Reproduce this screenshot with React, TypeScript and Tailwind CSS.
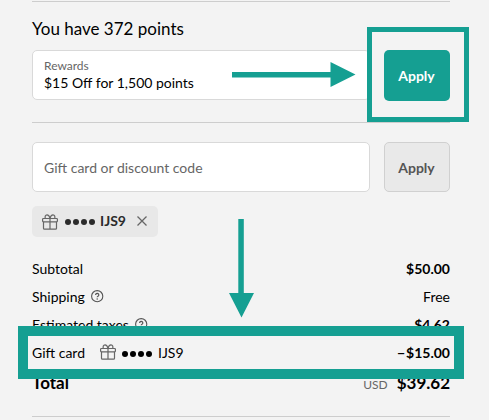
import type { ReactNode } from 'react';

function GiftIcon({ className = '' }: { className?: string }) {
  return (
    <svg
      className={className}
      width="16"
      height="16"
      viewBox="0 0 16 16"
      fill="none"
      stroke="#666"
      strokeWidth="1.2"
      strokeLinejoin="round"
    >
      <rect x="0.6" y="4.5" width="14.8" height="3.3" rx="0.8" />
      <path d="M1.5 7.8v6.400a1 1 0 0 0 1 1h11a1 1 0 0 0 1-1V7.800M8 4.500v10.700" />
      <path d="M3.400 4.400C2.600 2.800 3.400.8 5 .8 6.600.8 7.500 2.200 8 4.300 8.500 2.200 9.400.8 11 .8c1.600 0 2.400 2 1.600 3.600" />
    </svg>
  );
}

function HelpIcon() {
  return (
    <svg className="-mt-[2px]" width="13" height="13" viewBox="0 0 13 13" fill="none" stroke="#555" strokeWidth="1.1">
      <circle cx="6.2" cy="6.2" r="5.6" />
      <path d="M4.600 4.900a1.600 1.500 0 1 1 2.400 1.300c-.5.3-.8.5-.8 1.100" strokeWidth="1.2" />
      <circle cx="6.2" cy="8.9" r="0.75" fill="#555" stroke="none" />
    </svg>
  );
}

function Dots({ className = '' }: { className?: string }) {
  return (
    <span className={`flex gap-[2px] ${className}`}>
      {[0, 1, 2, 3].map((i) => (
        <span key={i} className="size-[6px] rounded-full bg-current" />
      ))}
    </span>
  );
}

function SummaryRow({ label, value, bold = true }: { label: ReactNode; value: ReactNode; bold?: boolean }) {
  return (
    <div className="flex h-7 items-center justify-between">
      <div className="flex items-center gap-1.5">{label}</div>
      <div className={bold ? 'font-bold' : ''}>{value}</div>
    </div>
  );
}

export default function App() {
  return (
    <div className="relative h-[420px] w-[489px] overflow-hidden bg-[#f3f3f3] font-[Lato,sans-serif] text-[14px] leading-5 text-black">
      <div className="ml-8 flex w-[418px] flex-col pt-px">
        <section className="h-[121px] border-t border-[#cdcdcd] pt-[15px]">
          <h2 className="h-[33px] text-[17px] leading-6">You have 372 points</h2>
          <div className="flex justify-between">
            <div className="h-[50px] w-[338px] rounded-[5px] border border-[#d9d9d9] bg-white px-[11px] pt-[7px]">
              <div className="text-[12px] leading-4 text-[#666]">Rewards</div>
              <div className="leading-[18px]">$15 Off for 1,500 points</div>
            </div>
            <button className="h-[51px] w-[66px] rounded-[5px] bg-[#159f92] pr-px font-bold text-white">Apply</button>
          </div>
        </section>

        <section className="h-[133px] border-t border-[#cdcdcd] pt-[19px]">
          <div className="flex justify-between">
            <div className="flex h-[50px] w-[338px] items-center rounded-[5px] border border-[#d9d9d9] bg-white px-[11px] pt-px text-[#666]">
              Gift card or discount code
            </div>
            <button className="h-[50px] w-[66px] rounded-[5px] border border-[#d0d0d0] bg-[#e9e9e9] pt-px pr-px font-bold text-[#555]">
              Apply
            </button>
          </div>
          <div className="mt-[14px] flex h-[31px] w-[126px] items-center rounded-[5px] bg-[#e8e8e8] pl-[10px] font-bold text-[#2b2b2b]">
            <GiftIcon />
            <Dots className="ml-[7px]" />
            <span className="-mt-px ml-[5px]">IJS9</span>
            <svg className="-mt-px ml-[11px]" width="10" height="10" viewBox="0 0 10 10" stroke="#666" strokeWidth="1.3">
              <path d="M0.5 0.5l9 9M9.5 0.5l-9 9" />
            </svg>
          </div>
        </section>

        <section className="h-[162px] border-b border-[#cdcdcd]">
          <SummaryRow label="Subtotal" value="$50.00" />
          <SummaryRow label={<>Shipping <HelpIcon /></>} value="Free" bold={false} />
          <SummaryRow label={<>Estimated taxes <HelpIcon /></>} value="$4.62" />
          <SummaryRow
            label={
              <>
                Gift card
                <GiftIcon className="-mt-[2px] ml-[9px]" />
                <Dots className="mt-px" />
                <span>IJS9</span>
              </>
            }
            value={<><span className="mr-px">−</span>$15.00</>}
          />
          <div className="flex h-8 items-baseline justify-between pt-[6px] text-[17px] font-bold">
            <span>Total</span>
            <span>
              <span className="mr-[9px] text-[12px] font-normal text-[#666]">USD</span>$39.62
            </span>
          </div>
        </section>
      </div>

      {/* Callout frames and arrows */}
      <div className="absolute left-[367px] top-[27px] h-[95px] w-[102px] border-[5px] border-[#159f92]" />
      <div className="absolute left-[18px] top-[326px] h-[53px] w-[446px] border-[10px] border-[#159f92]" />
      <svg className="absolute left-[232px] top-[62px]" width="124" height="25" viewBox="0 0 124 25" fill="#159f92">
        <path d="M0 10h98.5V0L123.500 12.500 98.500 25V15.500H0z" />
      </svg>
      <svg className="absolute left-[229px] top-[219px]" width="25" height="99" viewBox="0 0 25 99" fill="#159f92">
        <path d="M9.300 0v74H0l12.500 24.500L25 74H14.800V0z" />
      </svg>
    </div>
  );
}
